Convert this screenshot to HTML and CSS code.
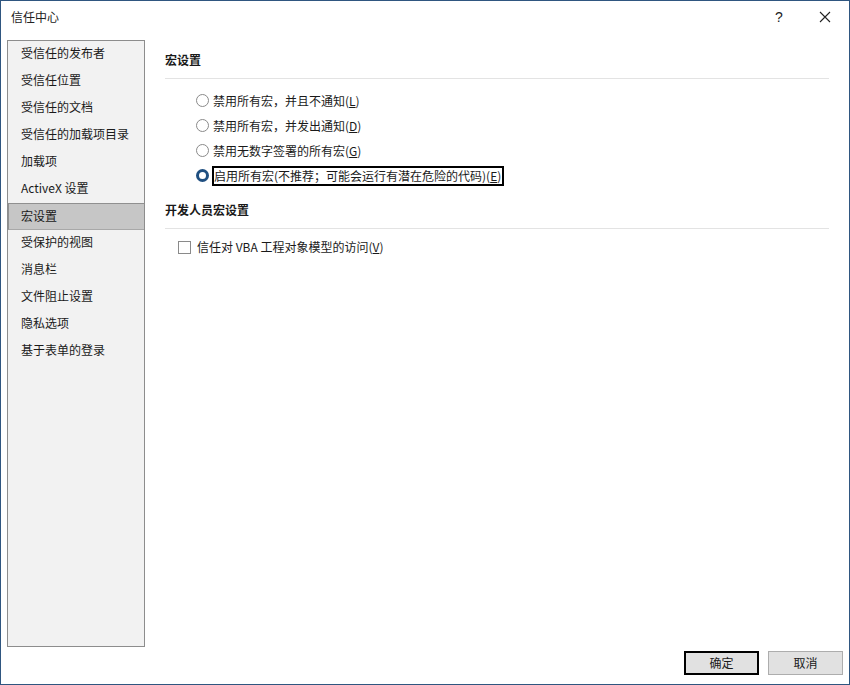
FILE: index.html
```html
<!DOCTYPE html>
<html lang="zh-CN">
<head>
<meta charset="utf-8">
<title>信任中心</title>
<link rel="stylesheet" href="styles.css">
</head>
<body>
<div class="window">
  <div class="titlebar">
    <span class="title">信任中心</span>
    <span class="spacer"></span>
    <span class="tb-btn help">?</span>
    <span class="tb-btn close">
      <svg width="12" height="12" viewBox="0 0 12 12"><path d="M1 1 L11 11 M11 1 L1 11" stroke="#222" stroke-width="1.1" fill="none"/></svg>
    </span>
  </div>
  <div class="main">
    <ul class="nav">
      <li class="nav-item">受信任的发布者</li>
      <li class="nav-item">受信任位置</li>
      <li class="nav-item">受信任的文档</li>
      <li class="nav-item">受信任的加载项目录</li>
      <li class="nav-item">加载项</li>
      <li class="nav-item">ActiveX 设置</li>
      <li class="nav-item selected">宏设置</li>
      <li class="nav-item">受保护的视图</li>
      <li class="nav-item">消息栏</li>
      <li class="nav-item">文件阻止设置</li>
      <li class="nav-item">隐私选项</li>
      <li class="nav-item">基于表单的登录</li>
    </ul>
    <div class="content">
      <div class="section-head first">宏设置</div>
      <div class="radios">
        <div class="radio-row"><span class="radio"></span><span class="label">禁用所有宏，并且不通知(<u>L</u>)</span></div>
        <div class="radio-row"><span class="radio"></span><span class="label">禁用所有宏，并发出通知(<u>D</u>)</span></div>
        <div class="radio-row"><span class="radio"></span><span class="label">禁用无数字签署的所有宏(<u>G</u>)</span></div>
        <div class="radio-row"><span class="radio checked"></span><span class="label focus">启用所有宏(不推荐；可能会运行有潜在危险的代码)(<u>E</u>)</span></div>
      </div>
      <div class="section-head">开发人员宏设置</div>
      <div class="check-row"><span class="checkbox"></span><span class="label">信任对 VBA 工程对象模型的访问(<u>V</u>)</span></div>
    </div>
  </div>
  <div class="footer">
    <button class="btn default">确定</button>
    <button class="btn">取消</button>
  </div>
</div>
</body>
</html>
```

FILE: styles.css
```css
* { box-sizing: border-box; }
html, body { margin: 0; padding: 0; background: #ffffff; }
body {
  font-family: "Noto Sans CJK SC", "Noto Sans", "Liberation Sans", sans-serif;
  font-size: 12px;
  color: #1a1a1a;
}
.window {
  width: 850px;
  height: 685px;
  border: 1px solid #2f5680;
  display: flex;
  flex-direction: column;
  background: #ffffff;
}
.titlebar {
  height: 32px;
  display: flex;
  align-items: center;
  padding-left: 10px;
  flex-shrink: 0;
}
.title { font-size: 12px; color: #222; line-height: 20px; }
.spacer { flex: 1; }
.tb-btn {
  width: 46px;
  height: 32px;
  display: flex;
  align-items: center;
  justify-content: center;
  color: #222;
}
.help { font-family: "Liberation Sans", sans-serif; font-size: 14px; }
.close { margin-right: 1px; }
.main {
  flex: 1;
  display: flex;
  padding: 7px 6px 0 6px;
  min-height: 0;
}
.nav {
  list-style: none;
  margin: 0;
  padding: 0;
  width: 138px;
  flex-shrink: 0;
  background: #f2f2f2;
  border: 1px solid #8d8d8d;
}
.nav-item {
  height: 27px;
  line-height: 24px;
  padding-left: 13px;
  white-space: nowrap;
  color: #1a1a1a;
}
.nav-item.selected {
  background: #c6c6c6;
  border-top: 1px solid #909090;
  border-bottom: 1px solid #a8a8a8;
  border-left: 1px solid #909090;
  line-height: 23px;
  padding-left: 12px;
}
.content {
  flex: 1;
  padding: 0 14px 0 20px;
}
.section-head {
  font-weight: bold;
  line-height: 20px;
  padding-top: 12px;
  padding-bottom: 8px;
  border-bottom: 1px solid #e3e3e3;
}
.section-head.first { padding-top: 10px; }
.radios { margin-top: 9px; }
.radio-row {
  height: 25px;
  display: flex;
  align-items: center;
  padding-left: 31px;
}
.radio {
  width: 13px;
  height: 13px;
  border-radius: 50%;
  border: 1px solid #8a8a8a;
  background: #fff;
  flex-shrink: 0;
  margin-right: 4px;
}
.radio.checked {
  border: 3px solid #1f4f80;
}
.label { line-height: 20px; white-space: nowrap; }
.label.focus {
  border: 2px solid #000;
  line-height: 16px;
  padding: 0 1px 0 0;
  margin-left: -1px;
}
.check-row {
  margin-top: 8px;
  height: 20px;
  display: flex;
  align-items: center;
  padding-left: 13px;
}
.checkbox {
  width: 13px;
  height: 13px;
  border: 1px solid #8a8a8a;
  background: #fff;
  margin-right: 6px;
  flex-shrink: 0;
}
.footer {
  height: 37px;
  flex-shrink: 0;
  display: flex;
  justify-content: flex-end;
  align-items: flex-start;
  padding: 4px 6px 0 0;
  gap: 9px;
}
.btn {
  width: 75px;
  height: 24px;
  background: #e1e1e1;
  border: 1px solid #adadad;
  font-family: "Noto Sans CJK SC", "Noto Sans", sans-serif;
  font-size: 12px;
  color: #1a1a1a;
  padding: 0;
  line-height: 20px;
}
.btn.default { border: 2px solid #000; }
```
